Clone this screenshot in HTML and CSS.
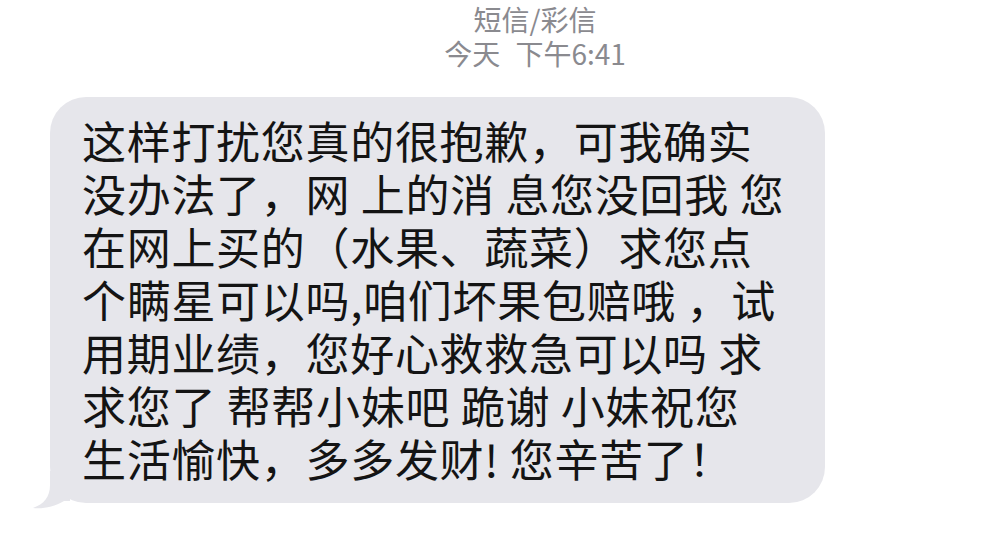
FILE: index.html
```html
<!DOCTYPE html>
<html lang="zh-CN">
<head>
<meta charset="utf-8">
<title>短信/彩信</title>
<link rel="stylesheet" href="styles.css">
</head>
<body>
<div class="screen">
  <header class="meta">
    <div class="meta-line">短信/彩信</div>
    <div class="meta-line meta-time">今天 下午6:41</div>
  </header>
  <div class="thread">
    <div class="bubble">
      <p class="text">这样打扰您真的很抱歉，可我确实
没办法了，网 上的消 息您没回我 您
在网上买的（水果、蔬菜）求您点
个瞒星可以吗,咱们坏果包赔哦 ，试
用期业绩，您好心救救急可以吗 求
求您了 帮帮小妹吧 跪谢 小妹祝您
生活愉快，多多发财! 您辛苦了！</p>
      <svg class="tail" width="40" height="40" viewBox="0 0 40 40" aria-hidden="true">
        <path d="M20 0 L20 14 C20 26 14 33 3 37 C13 38 24 36 34 30 L40 30 L40 0 Z" fill="#e6e6eb"/>
      </svg>
    </div>
  </div>
</div>
</body>
</html>
```
FILE: styles.css
```css
* { box-sizing: border-box; }
html, body { margin: 0; padding: 0; background: #ffffff; }
body {
  font-family: "Noto Sans CJK SC", "Noto Sans", "Liberation Sans", sans-serif;
}
.screen {
  width: 994px;
  height: 536px;
  overflow: hidden;
  padding-top: 2px;
}
.meta {
  padding-left: 76px;
  text-align: center;
  color: #8a8a8f;
  font-size: 28px;
  line-height: 34px;
}
.meta-line { white-space: nowrap; }
.meta-time { word-spacing: 9px; }
.thread {
  margin-top: 27px;
  padding-left: 50px;
}
.bubble {
  position: relative;
  width: 775px;
  height: 406px;
  background: #e6e6eb;
  border-radius: 36px;
  padding: 17px 20px 0 32px;
}
.text {
  margin: 0;
  white-space: pre;
  color: #141414;
  font-size: 44px;
  line-height: 53px;
  letter-spacing: 0.7px;
}
.tail {
  position: absolute;
  left: -20px;
  bottom: -8px;
}
```
